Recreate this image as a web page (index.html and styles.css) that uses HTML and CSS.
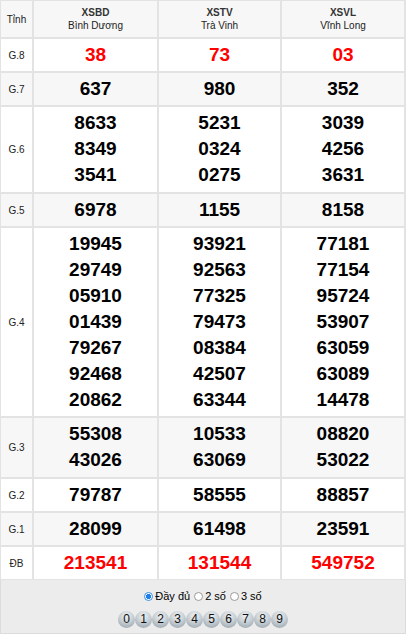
FILE: index.html
```html
<!DOCTYPE html>
<html lang="vi">
<head>
<meta charset="utf-8">
<title>KQXS</title>
<link rel="stylesheet" href="styles.css">
</head>
<body>
<table class="kq">
  <colgroup>
    <col class="c-lbl"><col class="c-a"><col class="c-b"><col class="c-c">
  </colgroup>
  <thead>
    <tr class="hd">
      <th class="lbl-h">Tỉnh</th>
      <th><span class="code">XSBD</span><br>Bình Dương</th>
      <th><span class="code">XSTV</span><br>Trà Vinh</th>
      <th><span class="code">XSVL</span><br>Vĩnh Long</th>
    </tr>
  </thead>
  <tbody>
    <tr>
      <td class="lbl">G.8</td>
      <td><div class="n red">38</div></td>
      <td><div class="n red">73</div></td>
      <td><div class="n red">03</div></td>
    </tr>
    <tr class="alt">
      <td class="lbl">G.7</td>
      <td><div class="n">637</div></td>
      <td><div class="n">980</div></td>
      <td><div class="n">352</div></td>
    </tr>
    <tr class="multi">
      <td class="lbl">G.6</td>
      <td><div class="n">8633</div><div class="n">8349</div><div class="n">3541</div></td>
      <td><div class="n">5231</div><div class="n">0324</div><div class="n">0275</div></td>
      <td><div class="n">3039</div><div class="n">4256</div><div class="n">3631</div></td>
    </tr>
    <tr class="alt">
      <td class="lbl">G.5</td>
      <td><div class="n">6978</div></td>
      <td><div class="n">1155</div></td>
      <td><div class="n">8158</div></td>
    </tr>
    <tr>
      <td class="lbl">G.4</td>
      <td><div class="n">19945</div><div class="n">29749</div><div class="n">05910</div><div class="n">01439</div><div class="n">79267</div><div class="n">92468</div><div class="n">20862</div></td>
      <td><div class="n">93921</div><div class="n">92563</div><div class="n">77325</div><div class="n">79473</div><div class="n">08384</div><div class="n">42507</div><div class="n">63344</div></td>
      <td><div class="n">77181</div><div class="n">77154</div><div class="n">95724</div><div class="n">53907</div><div class="n">63059</div><div class="n">63089</div><div class="n">14478</div></td>
    </tr>
    <tr class="alt multi">
      <td class="lbl">G.3</td>
      <td><div class="n">55308</div><div class="n">43026</div></td>
      <td><div class="n">10533</div><div class="n">63069</div></td>
      <td><div class="n">08820</div><div class="n">53022</div></td>
    </tr>
    <tr>
      <td class="lbl">G.2</td>
      <td><div class="n">79787</div></td>
      <td><div class="n">58555</div></td>
      <td><div class="n">88857</div></td>
    </tr>
    <tr class="alt">
      <td class="lbl">G.1</td>
      <td><div class="n">28099</div></td>
      <td><div class="n">61498</div></td>
      <td><div class="n">23591</div></td>
    </tr>
    <tr>
      <td class="lbl">ĐB</td>
      <td><div class="n red">213541</div></td>
      <td><div class="n red">131544</div></td>
      <td><div class="n red">549752</div></td>
    </tr>
  </tbody>
</table>
<div class="foot">
  <div class="opts">
    <label class="opt"><input type="radio" name="mode" checked><span>Đầy đủ</span></label>
    <label class="opt"><input type="radio" name="mode"><span>2 số</span></label>
    <label class="opt"><input type="radio" name="mode"><span>3 số</span></label>
  </div>
  <div class="balls">
    <span class="ball">0</span><span class="ball">1</span><span class="ball">2</span><span class="ball">3</span><span class="ball">4</span><span class="ball">5</span><span class="ball">6</span><span class="ball">7</span><span class="ball">8</span><span class="ball">9</span>
  </div>
</div>
</body>
</html>
```
FILE: styles.css
```css
html, body {
  margin: 0;
  padding: 0;
  background: #fff;
}
body {
  font-family: "Liberation Sans", Arial, sans-serif;
  color: #222;
}
.kq {
  border-collapse: separate;
  border-spacing: 0;
  table-layout: fixed;
  width: 406px;
  border-right: 1px solid #e3e3e3;
}
.c-lbl { width: 33px; }
.c-a { width: 125px; }
.c-b { width: 123px; }
.c-c { width: 124px; }
.kq th,
.kq td {
  border: 1px solid #e3e3e3;
  padding: 3px 0;
  text-align: center;
  vertical-align: middle;
}
.kq .multi td {
  padding-bottom: 4px;
}
.hd th {
  background: #f7f7f7;
  font-weight: normal;
  font-size: 10px;
  line-height: 13px;
  color: #222;
  padding: 5px 0;
}
.hd .code {
  font-weight: bold;
  color: #333;
}
.alt td {
  background: #f7f7f7;
}
.lbl {
  font-size: 10px;
  color: #222;
}
.n {
  font-size: 19px;
  font-weight: bold;
  line-height: 26px;
  color: #000;
}
.n.red {
  color: #f00;
}
.foot {
  width: 404px;
  border: 1px solid #dcdcdc;
  border-top: none;
  background: #ececec;
  padding: 7px 0 5px;
}
.opts {
  display: flex;
  justify-content: center;
  align-items: center;
  gap: 4px;
  font-size: 11px;
  color: #000;
  height: 18px;
}
.opt {
  display: flex;
  align-items: center;
  gap: 2px;
}
.opt input {
  appearance: none;
  -webkit-appearance: none;
  margin: 0;
  width: 9px;
  height: 9px;
  border-radius: 50%;
  border: 1px solid #9a9a9a;
  background: #fff;
  box-sizing: border-box;
}
.opt input:checked {
  border-color: #3a8ee6;
  background: radial-gradient(circle, #1e7fe8 0 2.3px, #fff 2.8px);
}
.balls {
  display: flex;
  justify-content: center;
  margin-top: 6px;
}
.ball {
  width: 17px;
  height: 17px;
  border-radius: 50%;
  background: radial-gradient(circle at 50% 30%, #eef2f4 0%, #c8d0d5 45%, #8d9ba4 100%);
  font-size: 12px;
  line-height: 17px;
  text-align: center;
  color: #111;
}
```
